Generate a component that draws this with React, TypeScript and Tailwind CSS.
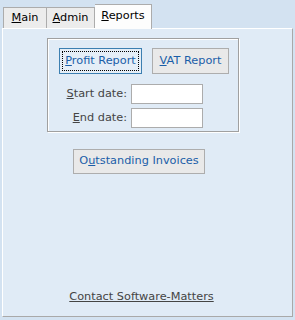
export default function App() {
  const font = "font-['Tahoma','DejaVu_Sans','Liberation_Sans',sans-serif]";
  return (
    <div className={`w-[295px] h-[320px] bg-[#d3e2f1] flex flex-col text-[11.3px] ${font}`}>
      {/* tabs */}
      <div className="flex items-end h-[28px] pl-[3px]">
        <div className="h-[21px] w-[44px] border border-[#acacac] border-b-0 bg-[#ececec] flex items-center justify-center text-black">
          <span><u>M</u>ain</span>
        </div>
        <div className="h-[21px] w-[48px] border border-l-0 border-[#acacac] border-b-0 bg-[#ececec] flex items-center justify-center text-black">
          <span><u>A</u>dmin</span>
        </div>
        <div className="relative z-10 -mb-[1px] h-[25px] w-[57px] border border-l-0 border-[#acacac] border-b-0 bg-[#fdfdfd] flex items-start justify-center pt-[3px] text-black">
          <span><u>R</u>eports</span>
        </div>
      </div>
      {/* panel */}
      <div className="mx-[2px] h-[289px] border border-white border-r-[#a9a9a9] border-b-[#a9a9a9] bg-[#e0ebf6] flex flex-col">
        <div className="ml-[44px] mt-[9px] w-[192px] h-[94px] border border-[#a0a0a0] shadow-[inset_1px_1px_0_#fff,1px_1px_0_#fff] flex flex-col">
          <div className="flex gap-[10px] pl-[11px] pt-[9px]">
            <button className="w-[83px] h-[26px] border border-[#3c7fb1] bg-[#e5eef7] p-[2px] text-[#1a5ea8]">
              <span className="flex h-full w-full items-center justify-center border border-dotted border-black">
                <span><u>P</u>rofit Report</span>
              </span>
            </button>
            <button className="w-[77px] h-[26px] border border-[#adadad] bg-[#e9e9e9] text-[#1a5ea8] flex items-center justify-center">
              <span><u>V</u>AT Report</span>
            </button>
          </div>
          <div className="mt-[10px] grid grid-cols-[79px_72px] gap-x-[4px] gap-y-[4px] items-center text-[#444]">
            <span className="text-right"><u>S</u>tart date:</span>
            <div className="h-[20px] border border-[#acacac] bg-white" />
            <span className="text-right"><u>E</u>nd date:</span>
            <div className="h-[20px] border border-[#acacac] bg-white" />
          </div>
        </div>
        <div className="ml-[70px] mt-[17px]">
          <button className="w-[132px] h-[25px] border border-[#adadad] bg-[#e9e9e9] text-[#1a5ea8] flex items-center justify-center">
            <span>O<u>u</u>tstanding Invoices</span>
          </button>
        </div>
        <div className="mt-auto mb-[10px] flex justify-center">
          <span className="underline text-[#444] text-center ml-[-12px]">Contact Software-Matters</span>
        </div>
      </div>
    </div>
  );
}
